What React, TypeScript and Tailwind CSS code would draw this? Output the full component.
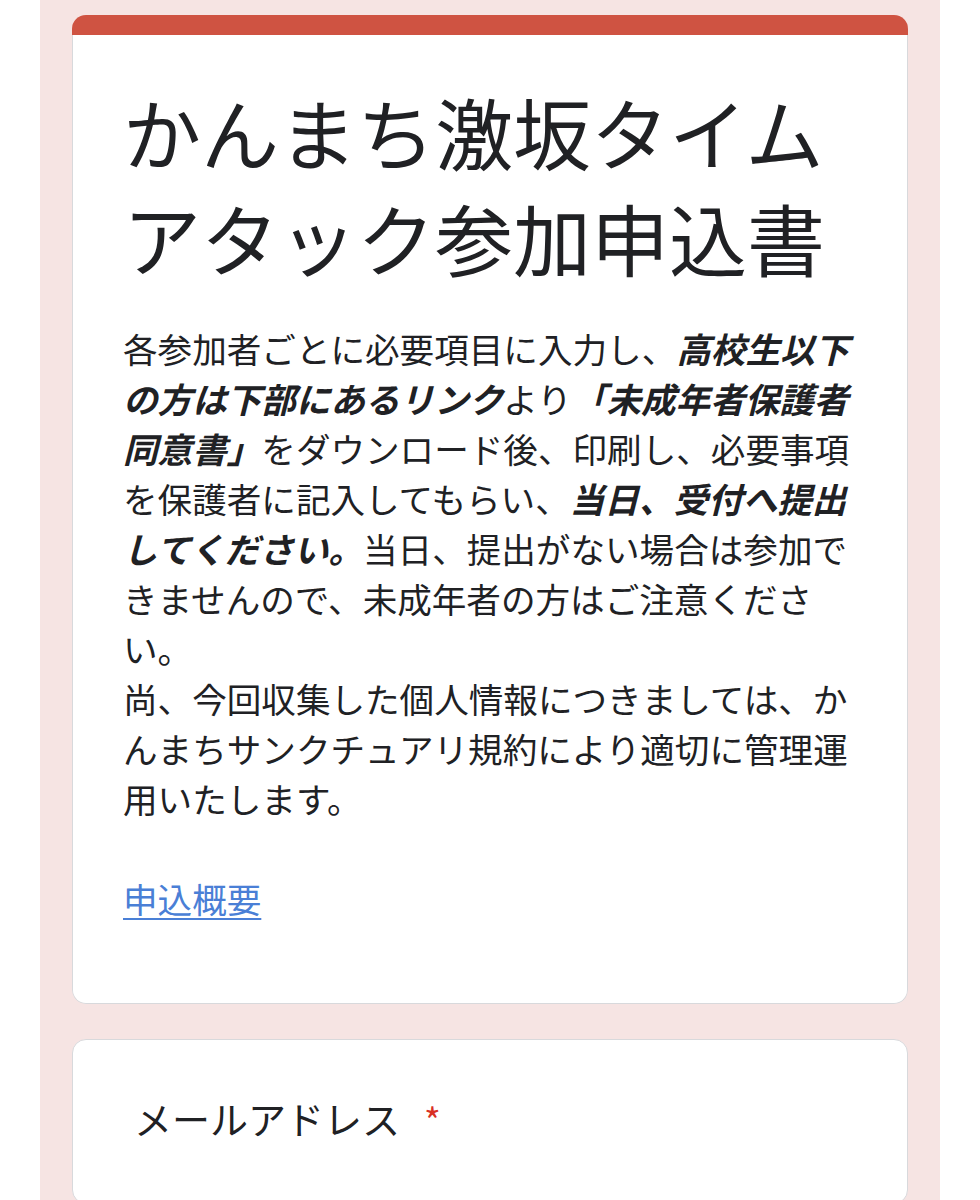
import React from 'react';

const font = { fontFamily: '"Noto Sans CJK JP", "Noto Sans", sans-serif' };

const B: React.FC<{ children: React.ReactNode }> = ({ children }) => (
  <span className="font-bold italic">{children}</span>
);

export default function App() {
  return (
    <div className="w-full min-h-[1200px] bg-white" style={font}>
      <div className="mx-[40px] min-h-[1200px] bg-[#f6e4e3] px-[32px] pt-[15px] pb-[40px] text-[#202124]">
        {/* header card */}
        <div className="rounded-[14px] overflow-hidden">
          <div className="h-[20px] bg-[#cf5342]" />
          <div className="bg-white border-x border-b border-[#d8d9dc] rounded-b-[14px] pl-[50px] pr-[30px] pt-[43px] pb-[80px]">
            <h1 className="text-[78px] leading-[106px] font-normal">
              かんまち激坂タイム
              <br />
              アタック参加申込書
            </h1>
            <p className="mt-[33px] text-[34.6px] leading-[50px] whitespace-nowrap">
              各参加者ごとに必要項目に入力し、<B>高校生以下</B>
              <br />
              <B>の方は下部にあるリンク</B>より<B>「未成年者保護者</B>
              <br />
              <B>同意書」</B>をダウンロード後、印刷し、必要事項
              <br />
              を保護者に記入してもらい、<B>当日、受付へ提出</B>
              <br />
              <B>してください。</B>当日、提出がない場合は参加で
              <br />
              きませんので、未成年者の方はご注意くださ
              <br />
              い。
              <br />
              尚、今回収集した個人情報につきましては、か
              <br />
              んまちサンクチュアリ規約により適切に管理運
              <br />
              用いたします。
            </p>
            <div className="mt-[50px] text-[34.6px] leading-[50px]">
              <a href="#" className="text-[#4a7fd6] underline underline-offset-[5px] decoration-[2px]">
                申込概要
              </a>
            </div>
          </div>
        </div>

        {/* email question card */}
        <div className="mt-[35px] bg-white border border-[#d8d9dc] rounded-[14px] pl-[61px] pt-[53px] pb-[60px]">
          <div className="text-[38px] leading-[50px] flex items-start">
            <span>メールアドレス</span>
            <span className="ml-[24px] mt-[6px] text-[#d93025] text-[36px] leading-[40px]">*</span>
          </div>
        </div>
      </div>
    </div>
  );
}
